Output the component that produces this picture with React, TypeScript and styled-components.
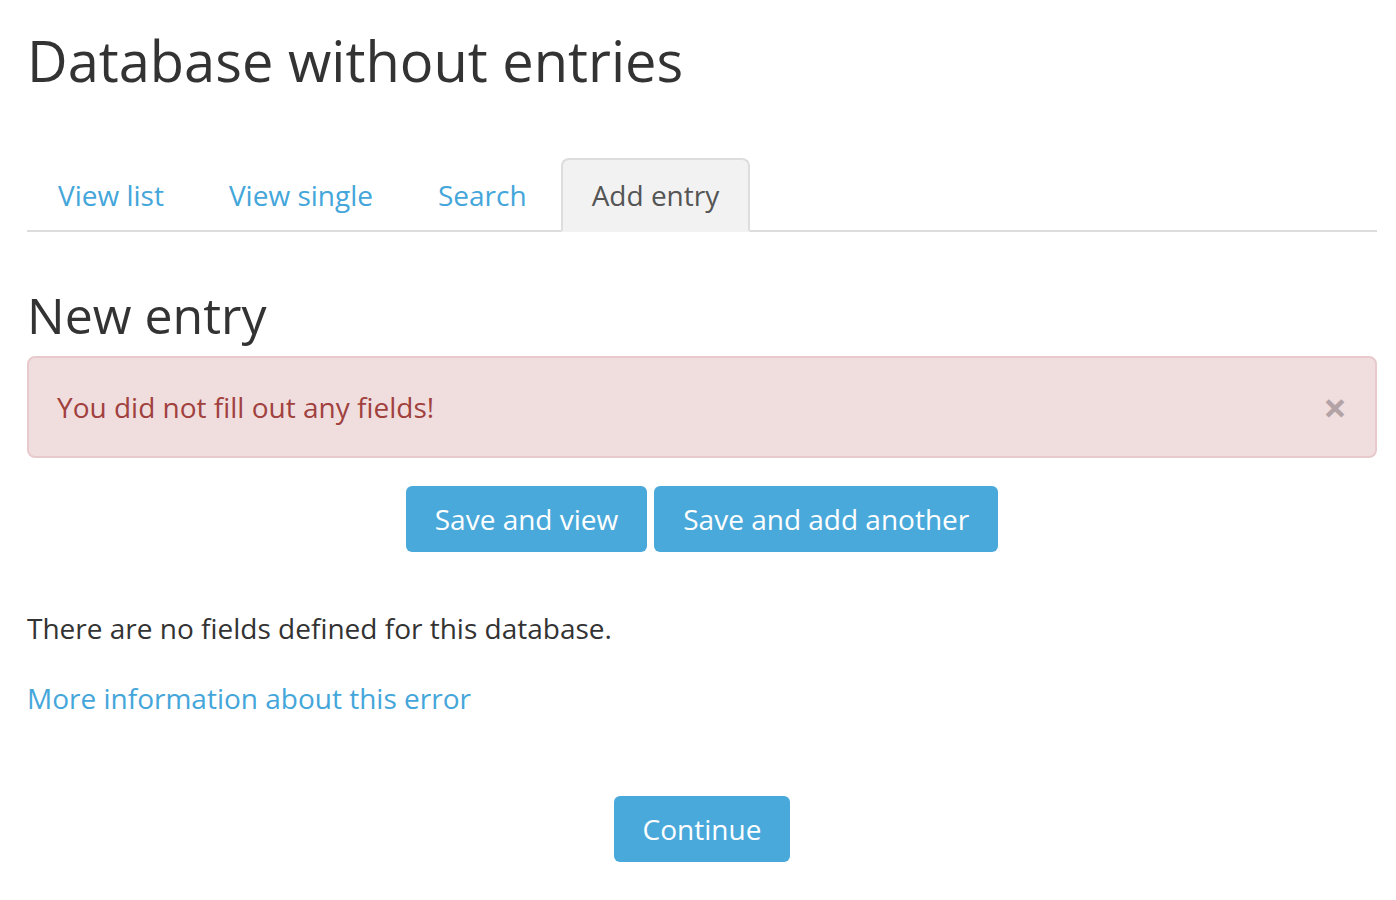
import styled, { createGlobalStyle } from 'styled-components';

const GlobalStyle = createGlobalStyle`
  html, body {
    margin: 0;
    padding: 0;
    background: #fff;
  }
  body {
    font-family: 'Open Sans', 'Noto Sans', sans-serif;
    color: #333;
  }
`;

const Page = styled.div`
  padding: 0 19px 0 27px;
`;

const Title = styled.h1`
  margin: 0;
  padding-top: 21px;
  font-size: 56px;
  font-weight: 400;
  line-height: 78px;
  color: #333;
`;

const Tabs = styled.ul`
  display: flex;
  gap: 3px;
  list-style: none;
  margin: 59px 0 0;
  padding: 0;
  border-bottom: 2px solid #ddd;
`;

const Tab = styled.li<{ $active?: boolean }>`
  margin-bottom: -2px;
  padding: 0 29px;
  height: 70px;
  display: flex;
  align-items: center;
  font-size: 28px;
  border: 2px solid ${(p) => (p.$active ? '#ddd' : 'transparent')};
  border-bottom-color: ${(p) => (p.$active ? '#f2f2f2' : 'transparent')};
  border-radius: 8px 8px 0 0;
  background: ${(p) => (p.$active ? '#f2f2f2' : 'transparent')};
  color: ${(p) => (p.$active ? '#555' : '#44a6da')};
  cursor: pointer;
`;

const SubTitle = styled.h2`
  margin: 48px 0 0;
  font-size: 50px;
  font-weight: 400;
  line-height: 70px;
  color: #333;
`;

const Alert = styled.div`
  margin-top: 6px;
  height: 102px;
  box-sizing: border-box;
  display: flex;
  align-items: center;
  justify-content: space-between;
  padding: 0 28px 0 28px;
  background: #f0dede;
  border: 2px solid #e8c9cc;
  border-radius: 8px;
  color: #a0413e;
  font-size: 28px;
`;

const Close = styled.span`
  color: #b3a3a6;
  font-size: 42px;
  font-weight: 700;
  line-height: 1;
  cursor: pointer;
`;

const ButtonRow = styled.div`
  display: flex;
  justify-content: center;
  gap: 7px;
  margin-top: 28px;
`;

const Button = styled.button`
  height: 66px;
  padding: 0 29px;
  border: none;
  border-radius: 6px;
  background: #4aa9db;
  color: #fff;
  font-family: 'Open Sans', 'Noto Sans', sans-serif;
  font-size: 28px;
  cursor: pointer;
`;

const Text = styled.p`
  margin: 56px 0 0;
  font-size: 28px;
  line-height: 40px;
  color: #333;
`;

const Link = styled.a`
  display: block;
  margin-top: 30px;
  font-size: 28px;
  line-height: 40px;
  color: #44a6da;
  text-decoration: none;
`;

const Footer = styled.div`
  display: flex;
  justify-content: center;
  margin-top: 78px;
`;

export default function App() {
  return (
    <>
      <GlobalStyle />
      <Page>
        <Title>Database without entries</Title>
        <Tabs>
          <Tab>View list</Tab>
          <Tab>View single</Tab>
          <Tab>Search</Tab>
          <Tab $active>Add entry</Tab>
        </Tabs>
        <SubTitle>New entry</SubTitle>
        <Alert>
          <span>You did not fill out any fields!</span>
          <Close>×</Close>
        </Alert>
        <ButtonRow>
          <Button>Save and view</Button>
          <Button>Save and add another</Button>
        </ButtonRow>
        <Text>There are no fields defined for this database.</Text>
        <Link href="#">More information about this error</Link>
        <Footer>
          <Button>Continue</Button>
        </Footer>
      </Page>
    </>
  );
}
